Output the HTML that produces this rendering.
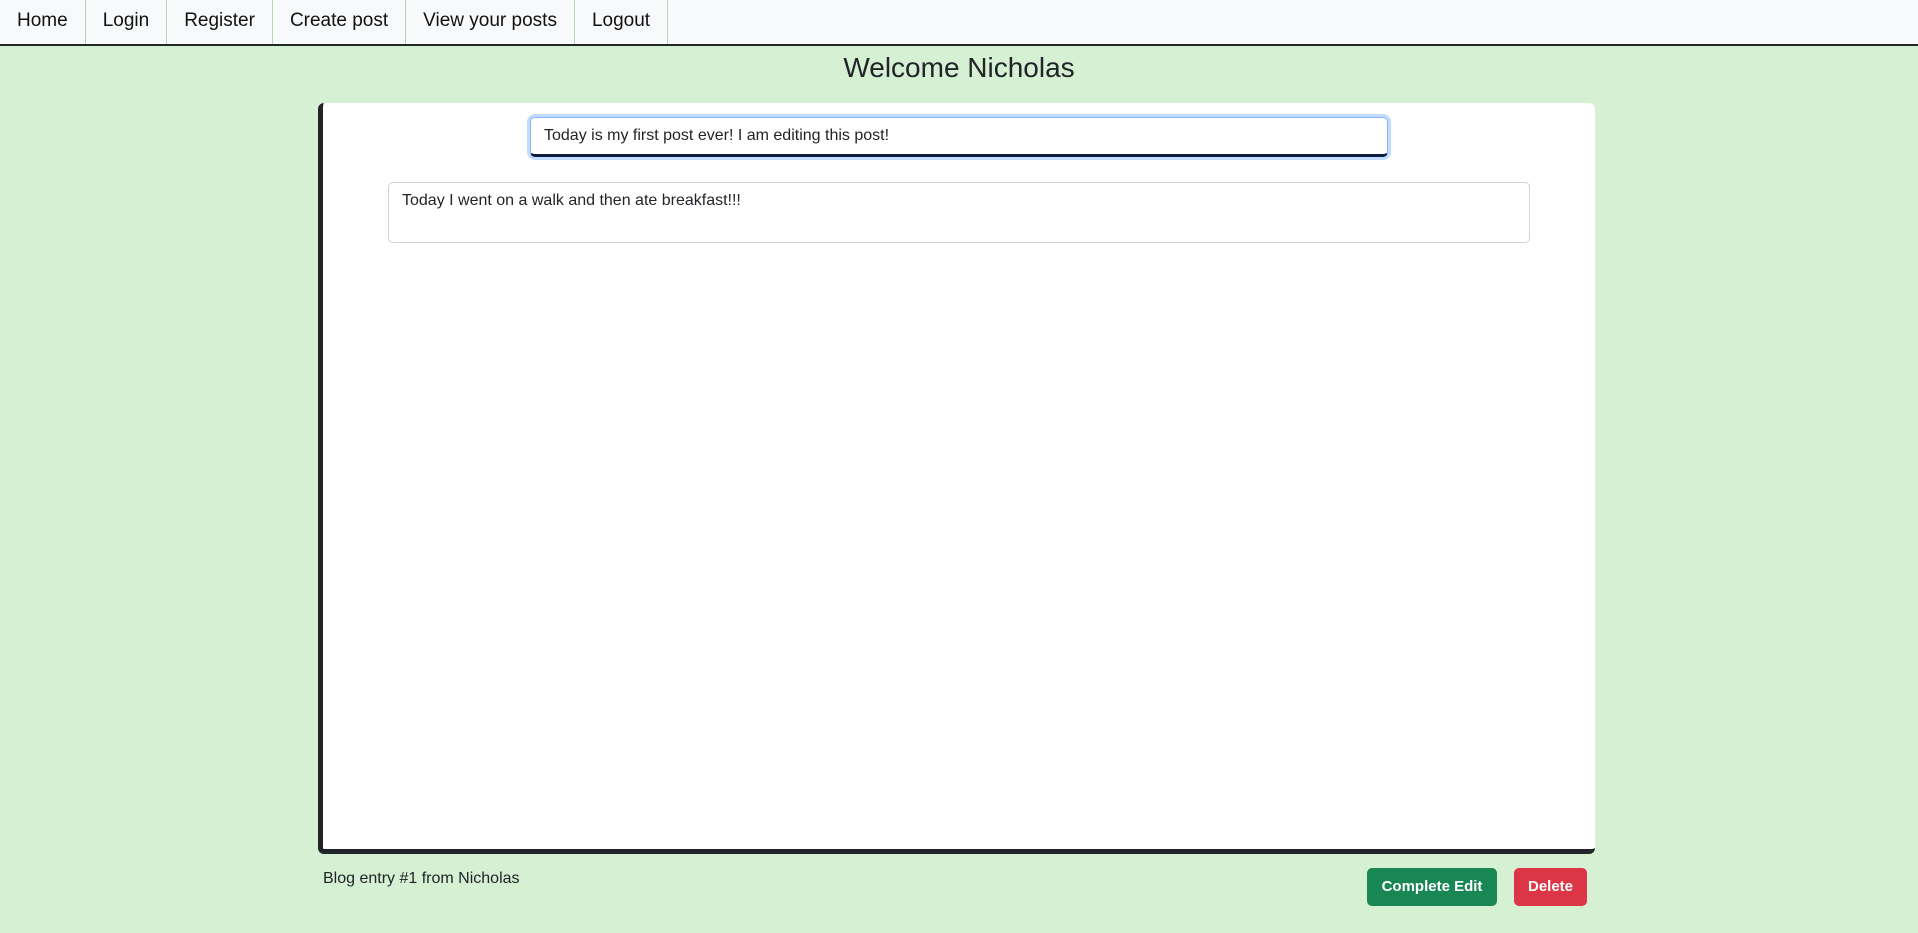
<!DOCTYPE html>
<html><head><style>
*{box-sizing:border-box;margin:0;padding:0}
body{width:1918px;height:933px;background:#d5f0d2;font-family:"Liberation Sans",sans-serif;color:#212529;position:relative;overflow:hidden}
nav{position:absolute;left:0;top:0;width:1918px;height:46px;background:#f8f9fa;border-bottom:2px solid #212529;display:flex}
nav a{display:block;height:44px;line-height:42px;padding:0 17px;font-size:19px;color:#111;border-right:1px solid #b8d6b4;text-decoration:none}
h1{position:absolute;top:52px;left:0;width:1918px;text-align:center;font-size:28px;font-weight:normal}
.card{position:absolute;left:318px;top:103px;width:1277px;height:751px;background:#fff;border-radius:6px;border-left:5px solid #212529;border-bottom:5px solid #212529}
.inp{position:absolute;left:530px;top:117px;width:858px;height:40px;border:1px solid #86b7fe;border-bottom:3px solid #0d1b3e;border-radius:5px;box-shadow:0 0 0 3px #c2dbfe;font-size:16px;padding:9px 13px;background:#fff}
.ta{position:absolute;left:388px;top:182px;width:1142px;height:61px;border:1px solid #ced4da;border-radius:5px;font-size:16px;padding:9px 13px}
.foot{position:absolute;left:323px;top:870px;font-size:16px}
.btn{position:absolute;top:868px;height:38px;border-radius:5px;color:#fff;font-size:15px;font-weight:bold;text-align:center;line-height:38px}
</style></head><body>
<nav><a>Home</a><a>Login</a><a>Register</a><a>Create post</a><a>View your posts</a><a>Logout</a></nav>
<h1>Welcome Nicholas</h1>
<div class="card"></div>
<div class="inp">Today is my first post ever! I am editing this post!</div>
<div class="ta">Today I went on a walk and then ate breakfast!!!</div>
<div class="foot">Blog entry #1 from Nicholas</div>
<div class="btn" style="left:1367px;width:130px;background:#198754">Complete Edit</div>
<div class="btn" style="left:1514px;width:73px;background:#dc3545">Delete</div>
</body></html>
